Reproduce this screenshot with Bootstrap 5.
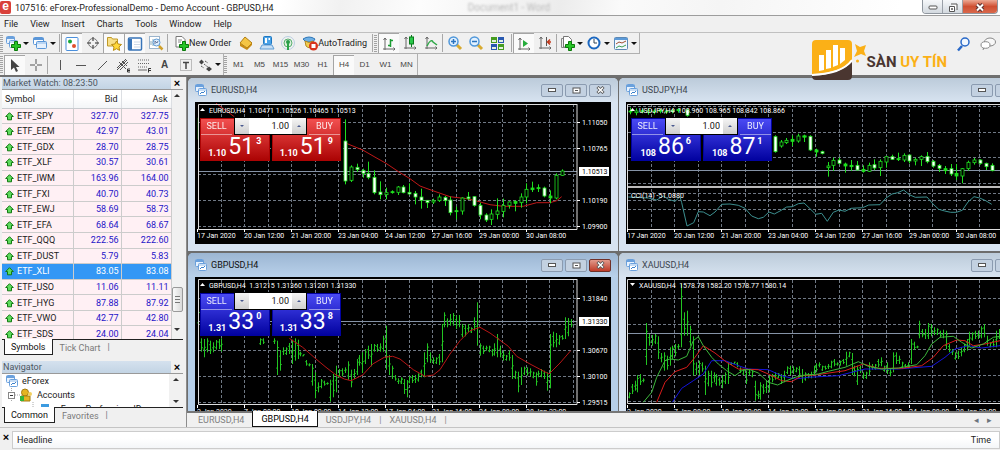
<!DOCTYPE html>
<html lang="en">
<head>
<meta charset="utf-8">
<meta name="viewport" content="width=device-width, initial-scale=1">
<title>eForex-ProfessionalDemo</title>
<link rel="stylesheet" href="https://cdn.jsdelivr.net/npm/bootstrap@5.3.0/dist/css/bootstrap.min.css">
<style>
:root{--ui:Roboto,"Liberation Sans",sans-serif}
body{font-family:var(--ui);font-size:9px;line-height:14px;color:#1c1c1c;background:#f0f0f0;overflow:hidden}
button,input{font-family:inherit;font-size:inherit;line-height:inherit;color:inherit}
button{border:0;background:none;padding:0}
.titlebar{height:16px;background:linear-gradient(100deg,#fff 28%,#f1f1f1 34%,#fdfdfd 42%,#ececec 56%,#fafafa 62%,#f5f5f5 72%,#fff 90%);border-bottom:1px solid #9d9d9d}
.logo-e{width:11px;height:13px;background:#d9403a;border-radius:2px;color:#fff;font:bold 12px/11px "Liberation Sans",sans-serif;text-align:center}
.wordghost{color:#bbb;filter:blur(1px);margin-left:194px;font-size:10px}
.syswin{height:14px;margin-right:2px;border:1px solid #8f969e;border-top:0;border-radius:0 0 4px 4px;overflow:hidden}
.syswin button{width:20px;background:linear-gradient(#f6f8fa,#d3d9df);border-right:1px solid #9aa0a8}
.syswin .closer{width:34px;background:linear-gradient(#eda994,#cf4f32 50%,#d9694c);border:0}
.menubar{height:17px;border-bottom:1px solid #c0c0c0;padding-left:4px;gap:12px}
.menubar a{color:#1c1c1c;text-decoration:none;line-height:16px}
.tools{height:21px}
.tools button{height:20px}
.tools svg{display:block;width:16px;height:16px}
.tb{width:21px;display:flex;align-items:center;justify-content:center}
.tbd{width:27px;display:flex;align-items:center;padding-left:1px!important}
.tbd::after{content:"";border:3px solid transparent;border-top-color:#111;border-bottom:0;margin-left:2px}
.pressed{background:#fafafa;border-left:1px solid #a5a5a5;border-top:1px solid #a5a5a5}
.vr-line{width:1px;height:18px;background:#a8a8a8;margin:0 1px}
.grip{width:4px;height:17px;background:repeating-linear-gradient(#a3a3a3 0 1px,#f0f0f0 1px 2px);border-right:1px solid #f0f0f0}
.toolgroup{border-bottom:1px solid #b0b0b0;border-right:1px solid #b0b0b0}
.tf{font:8px/18px "Liberation Sans",sans-serif;color:#444;width:21px}
.letter-a{font:bold 10px/18px "Liberation Sans",sans-serif;color:#444}
.brandmark{position:absolute;right:53px;top:40px;font:bold 15px/20px Roboto,sans-serif;color:#4a3630}
.brandmark span{padding-top:4px}
.brandmark em{font-style:normal;color:#fbb017}
.workspace{border-top:2px solid #707070;min-height:0}
.side{width:187px;border-right:1px solid #8c8c8c;padding:0 3px 0 2px}
.panelhead{height:12px;background:linear-gradient(#d5e1ee,#c3d4e4);color:#4d5661;line-height:12px;padding-left:1px}
.panelhead.lower{margin-top:6px}
.panelhead button,.xbtn{width:12px;background:#f0f0f0;font:bold 11px/10px "Liberation Sans",sans-serif;color:#000}
.listbox{background:#fff;border-top:1px solid #999;overflow:hidden}
.watch{height:250px}
.tree{height:34px}
.quotes{height:252px;width:169px;line-height:12px;border-collapse:collapse;table-layout:fixed}
.quotes th{font-weight:400;height:18px;border-right:1px solid #dcdfe3;border-bottom:1px solid #c9ccd0;background:linear-gradient(#fff 40%,#f3f5f7);padding:0 3px}
.quotes td{padding:0 2px;background:#fff0f4;border-right:1px solid #ccc;border-bottom:1px solid #ccc;text-align:right;color:#2414c8}
.quotes td:first-child{text-align:left;color:#1c1c1c;padding-left:3px;white-space:nowrap}
.quotes .picked td,.quotes .picked td:first-child{background:#3397f5;color:#fff}
.quotes svg{width:9px;height:9px;margin-right:3px;vertical-align:-2px}
.sbar{width:14px;background:#f1f1f1;font-size:6px;line-height:8px}
.tri{border:3px solid transparent;border-bottom-color:#333;border-top:0;width:0}
.tri.down{border-top:3px solid #333;border-bottom:0}
.thumb{width:11px;height:25px;border:1px solid #999;border-radius:2px;background:repeating-linear-gradient(#777 0 1px,#eee 1px 3px) center/5px 7px no-repeat,linear-gradient(90deg,#fafafa,#d9d9d9)}
.tabrow{height:16px;border-top:1px solid #222;padding-left:2px}
.tabrow button{color:#7a7a7a;padding:0 7px;height:15px}
.tabrow .on{background:#fff;color:#111;border:1px solid #222;border-top:0;margin-top:-1px;height:16px;padding:0 6px}
.mdi{background:#6d6d6d;display:grid;grid-template-columns:430fr 381fr;grid-template-rows:173px minmax(0,1fr);gap:2px 1px;padding:1px 0 0 1px;overflow:hidden;min-height:0}
.cwin{background:#d7e3f1;border-radius:5px 5px 0 0;padding:0 7px;overflow:hidden;position:relative}
.cwin.far{margin-right:-48px}
.cwin.live{background:#b6cfe9}
.cbar{height:24px;margin:0 -7px;padding:0 7px;background:linear-gradient(#bccbda,#d7e3f0)}
.live .cbar{background:linear-gradient(#9cb6d3,#b9d1ea)}
.cbar span{color:#3d4650}
.live .cbar span{color:#111}
.wb{width:22px;height:13px;border:1px solid #8b9bb0;border-radius:2px;background:#c3d1e1;display:flex;align-items:center;justify-content:center}
.wb.hot{background:linear-gradient(#e29a8c,#bf3b28);border-color:#703028}
.gap-fine{gap:2px}
.plot{display:block;width:100%;background:#000}
.plot text{font:7px Roboto,"Liberation Sans",sans-serif;fill:#fff;white-space:pre}
.trade{position:absolute;left:12px;top:40px;width:141px;height:43px;--hi:#f25050;--lo:#ac0404;color:#fff}
.trade.blue{--hi:#4a4af4;--lo:#0202a0}
.trade>button{flex:1 1 0;height:43px;background:linear-gradient(var(--hi),var(--lo));border:1px solid var(--lo);display:flex;flex-direction:column;justify-content:space-between}
.trade>button>b{font-weight:400;width:31px;text-align:center;line-height:15px;border-bottom:1px solid #fff8;opacity:.9}
.trade>button:last-child>b{align-self:flex-end}
.quote{width:100%;height:25px;justify-content:center;align-items:flex-end;gap:2px;font:bold 9px/13px Roboto,sans-serif}
.quote i{font:400 23px/26px Roboto,sans-serif}
.quote sup{top:0;align-self:flex-start;font:bold 9px/12px Roboto,sans-serif}
.lots{position:absolute;left:34px;top:-1px;width:73px;height:18px;border:1px solid #000;background:#fff;color:#111}
.lots button{width:14px;background:linear-gradient(#f5f5f5,#cfcfcf)}
.lots input{width:1px;flex:1;border:0;text-align:right;padding:0 3px}
.lots .tri{border-bottom-color:#4a5a90;margin:auto;border-width:2px;border-top-width:0}
.lots .tri.down{border-top:2px solid #4a5a90;border-bottom:0}
.booktabs{height:16px;border-top:2px solid #777;padding-left:3px;color:#888}
.booktabs button{color:#808080;padding:0 8px;height:14px}
.booktabs .on{background:#fff;color:#000;border:1px solid #111;border-top:0;height:16px;margin-top:-2px}
.terminal{height:23px;border-top:1px solid #c4c4c4}
.terminal .headrow{background:linear-gradient(#fff 40%,#f4f6f8);border:1px solid #ccc;margin-top:3px;height:18px;line-height:17px}
</style>
</head>
<body class="vh-100 d-flex flex-column">
<svg width="0" height="0" class="position-absolute">
<defs>
<symbol id="plus" viewBox="0 0 10 10"><path d="M3.5.5h3v3h3v3h-3v3h-3v-3h-3v-3h3z" fill="#27c427" stroke="#0a7a0a"/></symbol>
<symbol id="up" viewBox="0 0 9 9"><path d="M4.500 .7 8.300 4.500H6.500V7.800h-4V4.500H.7z" fill="#5fdc5f" stroke="#117a11"/></symbol>
<symbol id="chart" viewBox="0 0 12 12"><rect x=".5" y=".5" width="8" height="7" rx="1" fill="#e8f3ff" stroke="#6aa0dc"/><path d="M.5 2h8" stroke="#6aa0dc" stroke-width="2"/><rect x="3.500" y="4.500" width="8" height="7" rx="1" fill="#fff" stroke="#6aa0dc"/><path d="M4 6h7" stroke="#8bb8e8"/><path d="M5 10l2-2 1 1 2-2" fill="none" stroke="#3c82cc"/></symbol>
<symbol id="axes" viewBox="0 0 16 16"><path d="M4 2v12M2 13h12M2.500 4 4 2l1.500 2M12.500 11.500 14 13l-1.500 1.500" fill="none" stroke="#666"/></symbol>
<symbol id="lens" viewBox="0 0 16 16"><path d="M9.500 9.500 14 14" stroke="#d8aa30" stroke-width="3"/><circle cx="6.500" cy="6.500" r="4.500" fill="#e2f1ff" stroke="#4f97da" stroke-width="1.500"/></symbol>
</defs>
</svg>

<header>
<div class="titlebar d-flex align-items-center">
<div class="logo-e">e</div><span class="ms-1">107516: eForex-ProfessionalDemo - Demo Account - GBPUSD,H4</span>
<span class="wordghost">Document1 - Word</span>
<div class="syswin d-flex ms-auto align-self-start">
<button aria-label="Minimize"><svg width="10" height="6"><rect x="1" y="1" width="8" height="3" rx="1" fill="#fff" stroke="#555"/></svg></button>
<button aria-label="Restore"><svg width="10" height="10"><path d="M3 1h6v6M1.500 3.500h5v5h-5zM3.500 5.500h1v1h-1z" fill="#fff" stroke="#555"/></svg></button>
<button aria-label="Close" class="closer"><svg width="10" height="9"><path d="M2 1.500l6 6M8 1.500l-6 6" stroke="#5d3030" stroke-width="4"/><path d="M2 1.500l6 6M8 1.500l-6 6" stroke="#fff" stroke-width="2"/></svg></button>
</div>
</div>
<nav class="menubar d-flex">
<a href="#">File</a><a href="#">View</a><a href="#">Insert</a><a href="#">Charts</a><a href="#">Tools</a><a href="#">Window</a><a href="#">Help</a>
</nav>
<div class="d-flex tools">
<div class="toolgroup d-flex align-items-center">
<div class="grip"></div>
<button class="tbd" aria-label="New chart"><svg viewBox="0 0 16 16"><use href="#chart" x="1" y="1" width="12" height="12"/><use href="#plus" x="6" y="6" width="10" height="10"/></svg></button>
<button class="tbd" aria-label="Profiles"><svg viewBox="0 0 16 16"><rect x="1.500" y="2.500" width="10" height="7" rx="1" fill="#fff" stroke="#5a96d8"/><path d="M1.500 4h10" stroke="#5a96d8" stroke-width="2"/><rect x="4.500" y="6.500" width="10" height="7" rx="1" fill="#e6f1fd" stroke="#5a96d8"/><path d="M5 8h9" stroke="#8bb8e8"/></svg></button>
<div class="vr-line"></div>
<button class="tb pressed" aria-label="Market Watch"><svg viewBox="0 0 16 16"><rect x="2" y="1.500" width="12" height="13" rx="1" fill="#fff" stroke="#4a8fdc"/><circle cx="6" cy="5.500" r="2" fill="#18a838"/><circle cx="10" cy="10" r="2" fill="#e0502c"/></svg></button>
<button class="tb" aria-label="Data window"><svg viewBox="0 0 16 16"><circle cx="8" cy="8" r="4.500" fill="none" stroke="#777"/><path d="M8 2v4M8 10v4M2 8h4M10 8h4" stroke="#666" stroke-width="1.500"/></svg></button>
<button class="tb pressed" aria-label="Navigator"><svg viewBox="0 0 16 16"><path d="M1.500 1.500h4l1 1.500h5v7h-10z" fill="#f8e08a" stroke="#c09a28"/><path d="M10.500 5l1.600 3 3.400.5-2.500 2.400.6 3.500-3.100-1.700-3.100 1.700.6-3.500L5.500 8.500 8.900 8z" fill="#ffd83a" stroke="#b88a10"/></svg></button>
<button class="tb pressed" aria-label="Terminal"><svg viewBox="0 0 16 16"><rect x="1.500" y="2" width="13" height="12" rx="1" fill="#fff" stroke="#3874b8" stroke-width="1.500"/><rect x="2" y="3" width="3" height="11" fill="#3874b8"/><path d="M7 6h6M7 8.500h6M7 11h6" stroke="#cdd9e8"/></svg></button>
<button class="tb" aria-label="Strategy tester"><svg viewBox="0 0 16 16"><rect x="1.500" y="1.500" width="10" height="12" fill="#fff" stroke="#9bb4cc"/><path d="M3 10V6M5 11V4" stroke="#8ab"/><path d="M11 11l3.500 3.500" stroke="#cfa02c" stroke-width="2.500"/><circle cx="8.500" cy="7.500" r="3.500" fill="#dceeff" stroke="#5f9cd4"/><path d="M7 9V6l2 2 1-2" fill="none" stroke="#679"/></svg></button>
<div class="vr-line"></div>
<button class="d-flex align-items-center ps-1 pe-1"><svg viewBox="0 0 16 16"><path d="M3 1.500h6l3 3V12H3z" fill="#fff" stroke="#777"/><path d="M5 5h4M5 7h3" stroke="#888"/><use href="#plus" x="6" y="6" width="10" height="10"/></svg>New Order</button>
<button class="tb" aria-label="MetaEditor"><svg viewBox="0 0 16 16"><path d="M2 8 7 2l7 6-5 5z" fill="#f4c544" stroke="#b07c10"/><path d="M2 8v3l7 4 5-5V8l-5 5z" fill="#c78b14"/></svg></button>
<button class="tb" aria-label="Community"><svg viewBox="0 0 16 16"><rect x="4.500" y="1.500" width="8" height="8" rx="1" fill="#4aa3e8" stroke="#1f77c0"/><path d="M6 3h2v5H6zM9.500 3h1.500v2H9.500z" fill="#fff"/><path d="M3 10h10l2 4H1z" fill="#c8dff4" stroke="#5f9cd4"/></svg></button>
<button class="tb" aria-label="Signals"><svg viewBox="0 0 16 16"><circle cx="8" cy="8" r="6.500" fill="none" stroke="#b9cfe0"/><circle cx="8" cy="8" r="4" fill="#dcefdc" stroke="#58b070"/><circle cx="8" cy="7" r="2" fill="#289c48"/><path d="M8 8v7" stroke="#2ba54a" stroke-width="2"/></svg></button>
<button class="d-flex align-items-center ps-1 pe-1"><svg viewBox="0 0 16 16"><path d="M1 4q6-4 12 0l-2 3H4z" fill="#6fb0e4" stroke="#2d76b8"/><path d="M3 6q4 3 8 0v4q-3 5-7 1z" fill="#f3cd50" stroke="#b68a1c"/><circle cx="11.500" cy="11" r="4.500" fill="#d8341c"/><rect x="9.500" y="9" width="4" height="4" fill="#fff"/></svg>AutoTrading</button>
<div class="vr-line"></div><div class="grip"></div>
<button class="tb pressed" aria-label="Bar chart"><svg viewBox="0 0 16 16"><use href="#axes"/><path d="M9.500 3v8M7 9.500h2.500M9.500 4.500H12" stroke="#1c9c34" stroke-width="1.500"/></svg></button>
<button class="tb" aria-label="Candlesticks"><svg viewBox="0 0 16 16"><use href="#axes"/><path d="M9.500 0v12" stroke="#0a7a1c"/><rect x="7.500" y="2" width="4" height="7" fill="#2ac84a" stroke="#0a7a1c"/></svg></button>
<button class="tb" aria-label="Line chart"><svg viewBox="0 0 16 16"><use href="#axes"/><path d="M4 11q4-8 6-4l4 3" fill="none" stroke="#2fa848" stroke-width="1.500"/></svg></button>
<div class="vr-line"></div>
<button class="tb" aria-label="Zoom in"><svg viewBox="0 0 16 16"><use href="#lens"/><path d="M4 6.500h5M6.500 4v5" stroke="#2a74c0" stroke-width="1.500"/></svg></button>
<button class="tb" aria-label="Zoom out"><svg viewBox="0 0 16 16"><use href="#lens"/><path d="M4 6.500h5" stroke="#2a74c0" stroke-width="1.500"/></svg></button>
<button class="tb" aria-label="Tile windows"><svg viewBox="0 0 16 16"><path d="M2 2h6v6H2zM9 9h6v6H9z" fill="#459c20"/><path d="M9 2h6v6H9zM2 9h6v6H2z" fill="#2858b0"/><path d="M3 5h4v2H3zM10 5h4v2h-4zM3 12h4v2H3zM10 12h4v2h-4z" fill="#e4f2e0"/></svg></button>
<div class="vr-line ms-1"></div>
<button class="tb pressed" aria-label="Auto scroll"><svg viewBox="0 0 16 16"><use href="#axes"/><path d="M7 4l5 3.500L7 11z" fill="#25ac3c"/></svg></button>
<button class="tb" aria-label="Chart shift"><svg viewBox="0 0 16 16"><use href="#axes"/><path d="M9.500 2v9" stroke="#555"/><path d="M14 7h-3M13 4.500 10.500 7 13 9.500" fill="none" stroke="#c23a1c" stroke-width="1.500"/></svg></button>
<div class="vr-line"></div>
<button class="tbd" aria-label="Indicators"><svg viewBox="0 0 16 16"><path d="M2.500 3.500h7v9h-7z" fill="#eee" stroke="#888"/><path d="M4.500 1.500h5l3 3V12h-8z" fill="#fff" stroke="#777"/><use href="#plus" x="6" y="6" width="10" height="10"/></svg></button>
<button class="tbd" aria-label="Periods"><svg viewBox="0 0 16 16"><circle cx="8" cy="8" r="5.500" fill="#fff" stroke="#1c68c0" stroke-width="2"/><path d="M8 4v4h3" fill="none" stroke="#345"/></svg></button>
<button class="tbd" aria-label="Templates"><svg viewBox="0 0 16 16"><rect x="1.500" y="2.500" width="13" height="12" rx="1" fill="#f2f8ff" stroke="#5c88b4"/><path d="M1.500 4h13" stroke="#5c9ad8" stroke-width="2"/><path d="M3 9l3-2 3 1 4-2" fill="none" stroke="#a05030"/><path d="M3 13l3-2 3 1 4-2" fill="none" stroke="#3c9c50"/></svg></button>
</div>
<div class="ms-auto me-1 d-flex align-items-center gap-2">
<svg viewBox="0 0 16 16"><path d="M6 10 2 14.500" stroke="#2868c8" stroke-width="2.500"/><circle cx="9" cy="6" r="4" fill="#f2f8ff" stroke="#2868c8" stroke-width="1.500"/></svg>
<svg viewBox="0 0 16 16"><ellipse cx="10" cy="6" rx="5.500" ry="4" fill="#f8f8f8" stroke="#888"/><path d="M3 14l1-3" stroke="#888"/><ellipse cx="5.500" cy="9" rx="4.500" ry="3.300" fill="#fff" stroke="#888"/></svg>
</div>
</div>
<div class="d-flex tools">
<div class="toolgroup d-flex align-items-center border-bottom-0">
<div class="grip"></div>
<button class="tb pressed" aria-label="Cursor"><svg viewBox="0 0 16 16"><path d="M4 2v11l3-2.500 2 4.500 2-1-2-4h3.500z" fill="#444"/></svg></button>
<button class="tb" aria-label="Crosshair"><svg viewBox="0 0 16 16"><path d="M8 2v5M8 9v5M2 8h5M9 8h5" stroke="#555"/></svg></button>
<div class="vr-line"></div>
<button class="tb" aria-label="Vertical line"><svg viewBox="0 0 16 16"><path d="M8.500 3v10" stroke="#555"/></svg></button>
<button class="tb" aria-label="Horizontal line"><svg viewBox="0 0 16 16"><path d="M3 8.500h10" stroke="#555"/></svg></button>
<button class="tb" aria-label="Trendline"><svg viewBox="0 0 16 16"><path d="M4 13l9-9" stroke="#555"/></svg></button>
<button class="tb" aria-label="Channel"><svg viewBox="0 0 16 16"><path d="M2 11l9-9M5 13l8-8M2 13 12 3M4 5l7 7M7 4l5 5" stroke="#555"/><path d="M15 12h-2.500v3H15M12.500 13.500H15" fill="none" stroke="#333"/></svg></button>
<button class="tb" aria-label="Fibonacci"><svg viewBox="0 0 16 16"><path d="M2 3h12M2 6.500h12M2 10h9" stroke="#666" stroke-dasharray="1 1"/><path d="M2 13h9" stroke="#666"/><path d="M12.500 15.500v-4H15M12.500 13.500H15" fill="none" stroke="#333"/></svg></button>
<button class="tb letter-a" aria-label="Text">A</button>
<button class="tb" aria-label="Text label"><svg viewBox="0 0 16 16"><rect x="2.500" y="2.500" width="11" height="11" fill="none" stroke="#888" stroke-dasharray="1 1"/><path d="M5 5.500h6M8 5.500V12" stroke="#444" stroke-width="1.500"/></svg></button>
<button class="tbd" aria-label="Arrows"><svg viewBox="0 0 16 16"><path d="M2 5l2.500-2.500L7 5 4.500 7.500zM9 12l3-2.500 3 2.500-3 2.500z" fill="#444"/><path d="M7 7l5 4M8 4l3 2M4 9l3 2" stroke="#555" stroke-dasharray="2 1"/></svg></button>
</div>
<div class="toolgroup d-flex align-items-center border-bottom-0">
<div class="grip"></div>
<button class="tf">M1</button><button class="tf">M5</button><button class="tf">M15</button><button class="tf">M30</button><button class="tf">H1</button><button class="tf pressed">H4</button><button class="tf">D1</button><button class="tf">W1</button><button class="tf">MN</button>
</div>
</div>
</header>

<main class="workspace flex-grow-1 d-flex">
<aside class="side flex-shrink-0 d-flex flex-column">
<div class="panelhead d-flex justify-content-between flex-shrink-0"><span>Market Watch: 08:23:50</span><button aria-label="Close Market Watch">×</button></div>
<div class="listbox watch d-flex justify-content-between flex-shrink-0">
<table class="quotes">
<colgroup><col style="width:71px"><col style="width:48px"><col style="width:50px"></colgroup>
<thead><tr><th>Symbol</th><th class="text-end">Bid</th><th class="text-end">Ask</th></tr></thead>
<tbody id="rows"></tbody>
</table>
<div class="sbar d-flex flex-column align-items-center pt-1">
<div class="tri"></div><div class="thumb mt-auto"></div><div class="tri down my-2 mt-3"></div>
</div>
</div>
<div class="tabrow d-flex flex-shrink-0"><button class="on">Symbols</button><button>Tick Chart</button><span class="text-secondary">|</span></div>
<div class="panelhead lower d-flex justify-content-between flex-shrink-0"><span>Navigator</span><button aria-label="Close Navigator">×</button></div>
<div class="listbox tree d-flex justify-content-between flex-shrink-0">
<div class="ps-1 flex-grow-1">
<div class="d-flex align-items-center gap-1"><svg width="12" height="12"><use href="#chart"/></svg>eForex</div>
<div class="d-flex align-items-center gap-1"><svg width="27" height="14"><path d="M5.500 0v14M9 7h5" stroke="#aaa" stroke-dasharray="1 1"/><rect x="2.500" y="4.500" width="6" height="6" fill="#fff" stroke="#888"/><path d="M4 7.500h3" stroke="#333"/><circle cx="19" cy="4.500" r="3.500" fill="#e6b422" stroke="#a67c10"/><path d="M15 13V8h9v5z" fill="#e6b422" stroke="#a67c10"/><circle cx="24" cy="6" r="2" fill="#f3d060"/><path d="M14 8h4v5h-4z" fill="#35b53c"/></svg>Accounts</div>
<div class="d-flex align-items-center gap-1 ps-4"><svg width="22" height="14"><path d="M3 0v7h7" stroke="#aaa" fill="none" stroke-dasharray="1 1"/><rect x="11" y="2" width="8" height="9" fill="#3c9be0"/></svg>eForex-ProfessionalDemo</div>
</div>
<div class="sbar flex-shrink-0 d-flex flex-column align-items-center justify-content-between py-1"><div class="tri"></div><div class="tri down"></div></div>
</div>
<div class="tabrow d-flex flex-shrink-0"><button class="on">Common</button><button>Favorites</button><span class="text-secondary">|</span></div>
</aside>

<div class="flex-grow-1 d-flex flex-column" style="min-width:0">
<section class="mdi flex-grow-1" id="mdi"></section>
<div class="booktabs d-flex flex-shrink-0"><button>EURUSD,H4</button><button class="on">GBPUSD,H4</button><button>USDJPY,H4</button>|<button>XAUUSD,H4</button>|
<span class="ms-auto me-2 text-secondary d-flex gap-2"><span>◂</span><span>▸</span></span></div>
</div>
</main>

<footer class="terminal d-flex flex-shrink-0">
<button class="xbtn me-0 align-self-start mt-1" aria-label="Close terminal">×</button>
<div class="headrow flex-grow-1 d-flex justify-content-between px-1"><span>Headline</span><span class="pe-1">Time</span></div>
</footer>

<div class="brandmark d-flex align-items-center">
<svg width="55" height="40" viewBox="0 0 55 40"><path d="M4 0h32q4 0 4 4v16Q32 32 0 34V4q0-4 4-4z" fill="#fbb017"/><path d="M0 36q28-2 40-14v14q0 4-4 4H4q-4 0-4-4z" fill="#4a3630"/><path d="M7 15h5v15l-5 1zM14 10h5v18l-5 1zM21 5h5v20l-5 2zM28 8h5v12l-5 4z" fill="#fff"/><path d="M0 35q30-1 40-15" fill="none" stroke="#fff" stroke-width="2"/><path d="M43 4l5 3 6-2-2 6 2 5-5-2-7 3 3-6z" fill="#fbb017"/><circle cx="45.500" cy="21" r="1.500" fill="#fbb017"/></svg>
<span>SÀN <em>UY TÍN</em></span>
</div>

<script src="https://cdn.jsdelivr.net/npm/bootstrap@5.3.0/dist/js/bootstrap.bundle.min.js"></script>
<script>
const quotes = `SPY 327.70 327.75,EEM 42.97 43.01,GDX 28.70 28.75,XLF 30.57 30.61,IWM 163.96 164.00,FXI 40.70 40.73,EWJ 58.69 58.73,EFA 68.64 68.67,QQQ 222.56 222.60,DUST 5.79 5.83,XLI 83.05 83.08,USO 11.06 11.11,HYG 87.88 87.92,VWO 42.77 42.80,SDS 24.00 24.04`;
document.getElementById('rows').innerHTML = quotes.split(',').map(q => {
  const [s, b, a] = q.split(' ');
  return `<tr class="${s === 'XLI' ? 'picked' : ''}"><td><svg><use href="#up"/></svg>ETF_${s}</td><td>${b}</td><td>${a}</td></tr>`;
}).join('');

/* Series are kept in thirds of a pixel, relative to each chart's own origin. */
const T = 3;
const line = (pts, ox, oy, col, w = 1) =>
  `<polyline fill="none" stroke="${col}" stroke-width="${w}" points="${pts.trim().split(/\s+/).map(p => { const [x, y] = p.split(','); return (ox + x / T).toFixed(1) + ',' + (oy + y / T).toFixed(1); }).join(' ')}"/>`;
/* candle: x, high, low, body top, body bottom, kind (w filled, h hollow) */
const candles = (src, ox, oy) => src.trim().split(/\s+/).map(c => {
  const [x, h, l, a, b, k] = c.split(',');
  const X = Math.round(ox + x / T), Y = v => oy + v / T, hgt = Math.max(1, (b - a) / T);
  return `<path d="M${X + .5} ${Y(h)}V${Y(l)}" stroke="#1fe01f"/><rect x="${X - 1}" y="${Y(a)}" width="3" height="${hgt}" fill="${k === 'w' ? '#fff' : k === 'h' ? '#000' : '#1fe01f'}" stroke="#1fe01f" stroke-width=".8"/>`;
}).join('');
/* bar: x, high, low; open and close ticks sit inside the range */
const bars = (src, ox, oy) => src.trim().split(/\s+/).map((c, i) => {
  const [x, r] = c.split(':'), [h, l] = r.split('-').map(Number);
  const X = Math.round(ox + x / T) + .5, Y = v => (oy + v / T).toFixed(1), q = (l - h) * (i % 3 === 0 ? .2 : i % 3 === 1 ? .7 : .45);
  return `<path d="M${X} ${Y(h)}V${Y(l)}" stroke="#22c522"/><path d="M${X - 1.5} ${Y(l - q)}h1M${X + .5} ${Y(h + q)}h1" stroke="#1a9a1a"/>`;
}).join('');
const grid = (x0, x1, y0, y1, gx, ys) => {
  let d = '';
  for (let i = 0; gx + i * 23.45 < x1; i++) d += `M${Math.round(gx + i * 23.45) + .5} ${y0}V${y1}`;
  ys.forEach(y => d += `M${x0} ${y + .5}H${x1}`);
  return `<path d="${d}" stroke="#6f7884" stroke-dasharray="3 2"/>`;
};
const labels = (arr, x, y) => arr.map((t, i) => `<text x="${x + i * 47}" y="${y}">${t}</text>`).join('') + `<path d="${arr.map((t, i) => `M${x + .5 + i * 47} ${y - 9}v3`).join('')}" stroke="#fff"/>`;
const scale = (rows, now, y) => rows.map(r => `<path d="M577 ${r[1] + .5}h3" stroke="#fff"/><text x="582" y="${r[1] + 3}">${r[0]}</text>`).join('') +
  `<rect x="579" y="${y - 4}" width="30" height="9" fill="#fff"/><text x="582" y="${y + 3}" style="fill:#000">${now}</text>`;
const frame = (x0, y0, x1, y1) => `<path d="M${x1} ${y0}.500H${x0}.500V${y1}.500H${x1}${x1 < 600 ? `V${y0}` : ''}" fill="none" stroke="#ddd"/>`;
const now = (x0, x1, y) => `<path d="M${x0} ${y}.500H${x1}" stroke="#8593a6"/>`;
const d1 = ['17 Jan 2020', '20 Jan 12:00', '21 Jan 20:00', '23 Jan 04:00', '24 Jan 12:00', '27 Jan 16:00', '29 Jan 00:00', '30 Jan 08:00'];
const d2 = ['2 Jan 2020', '7 Jan 08:00', '10 Jan 00:00', '14 Jan 12:00', '17 Jan 04:00', '21 Jan 16:00', '24 Jan 08:00', '28 Jan 22:00'];

const eur = grid(198, 577, 103, 228, 221, [121, 147, 173, 199, 225]) + now(198, 577, 170) +
  line('90,82 145,122', 186, 75, '#c01818') + line('37,125 37,190', 186, 75, '#1fe01f') +
  line('476,200 530,222 570,245 600,262 642,290 672,308 702,330 737,343 792,362 842,368 872,375 912,386 952,391 1012,391 1052,380 1092,380 1112,374 1127,362', 186, 75, '#c01818') +
  candles('476,130,325,195,315,w 494,268,318,273,313,h 512,263,288,274,281,w 530,278,305,283,292,w 547,257,310,292,304,w 565,283,355,304,350,w 582,316,370,348,356,w 600,335,370,350,356,h 617,343,353,347,349 635,330,357,333,349,h', 186, 75) +
  candles('10,327,352,333,350,w 28,322,356,349,354,w 46,345,385,352,363,w 63,338,398,363,373,w 81,372,396,373,380,w 98,368,384,374,378,h 116,355,378,363,374,h 134,360,390,364,374,w 151,362,418,372,410,w 169,392,430,404,406 186,364,416,366,405,h 204,348,372,363,368,w 221,360,392,362,388,w 239,380,430,388,417,w 257,412,438,417,432,w 274,400,447,414,430,h 292,367,430,405,415,h 309,368,424,388,406,h 327,376,398,378,388,h 345,374,406,376,382 362,352,395,363,380,h 379,322,382,340,363,h 397,317,348,336,341 415,325,348,335,338 433,332,364,336,360,w 450,343,382,360,366 467,292,370,298,366,h 485,280,300,285,298,h', 400, 75) +
  frame(198, 103, 577, 228) + scale([['1.11050', 121], ['1.10765', 147], ['1.10190', 199], ['1.09900', 225]], '1.10513', 170) + labels(d1, 197, 237);

const jpy = grid(628, 1040, 103, 228, 651, [105, 131, 156, 182, 192, 199, 208]) + now(628, 1040, 169) +
  candles('46,95,115,105,108 64,97,118,105,110,h 82,98,112,104,107 100,97,116,104,109,h 118,100,115,105,107 136,98,112,102,106 154,100,114,105,107 172,99,112,103,106 190,97,110,100,104 215,98,122,102,118,w 463,178,200,182,192,h 479,178,230,182,227,w 497,192,215,198,210,h 514,186,204,193,200,h 532,178,210,190,196 549,173,200,180,195,h 567,176,198,180,182', 615, 75) +
  candles('12,178,195,180,183 30,178,225,181,222,w 47,218,242,222,228 65,224,235,227,232,w 83,258,302,270,275,h 100,245,285,253,268,h 117,245,265,252,262,w 135,260,290,264,270 153,252,285,268,272 170,255,283,268,282,w 188,268,290,280,286 206,260,288,268,286,h 223,250,283,266,276,w 241,250,300,256,275,h 258,240,275,242,258,h 276,236,252,242,250,w 293,230,255,248,250 311,232,258,238,252,h 328,236,262,237,255,w 346,245,268,250,255,h 363,238,270,242,250,h 381,228,262,241,257,w 399,252,275,256,270,w 416,264,288,268,277,w 434,270,294,278,284 452,264,300,278,294,w 469,264,312,292,300 487,276,322,278,300,h 504,254,284,259,278,h 522,246,266,252,260,h 539,250,266,252,262,w 557,260,282,262,272,w 575,262,286,268,284,w', 800, 75) +
  line('40,363 100,366 125,372 145,360 160,370 180,376 195,362 200,380 216,450 236,440 250,407 265,408 285,419 300,408 320,385 345,384 370,388 390,397 410,420 430,428 445,424 462,408 478,414 495,405 515,393 532,392 550,383 567,381 585,398 602,415 620,412 637,436 655,409 672,402 690,406 708,397 743,395 761,387 795,386 813,366 831,354 848,350 866,342 883,356 901,364 936,363 954,384 971,400 989,405 1007,409 1024,409 1042,403 1059,378 1077,362 1094,366 1112,374 1130,385', 615, 75, '#3c8f8f') +
  `<path d="M628 186H1040" stroke="#bbb" stroke-width="2"/><text x="631" y="197">CCI(14) -51.0880</text>` + frame(627, 103, 1040, 228) + labels(d1, 627, 237);

const gbp = grid(198, 577, 279, 403, 221, [297, 323, 349, 375, 401]) + now(198, 577, 320) +
  bars('37:180-232 46:268-308 55:270-325 64:268-310 73:275-315 82:280-310 90:273-302 99:270-300 106:268-308 222:268-288 230:268-285 265:268-285 274:275-378 283:303-365 292:295-318 300:295-318 309:282-315 318:272-345 327:268-335 335:272-330 343:308-322 352:316-322 361:333-350 370:343-352 379:345-410 388:370-448 397:400-430 406:390-418 415:395-410 423:400-407 432:392-458 441:375-445 450:350-430 459:360-385 468:358-382 476:355-372 485:337-392 494:362-415 503:360-390 512:330-378 520:318-350 529:310-372 538:300-345 547:290-330 556:285-352 565:285-308 573:285-308 582:283-308 591:260-308 600:230-362 609:318-378 617:350-390 626:378-395 635:388-405 644:388-405', 186, 248) +
  bars('2:385-400 11:390-435 20:393-445 28:382-403 37:378-402 46:378-402 55:373-398 64:362-385 72:310-385 80:283-340 89:310-342 98:325-345 107:325-345 116:315-348 125:225-340 133:190-235 142:208-235 151:195-230 160:192-230 168:200-240 177:198-235 186:225-265 195:228-262 204:225-250 213:235-252 222:205-245 230:160-290 239:283-320 248:290-315 257:290-305 266:290-310 275:300-322 283:283-320 292:255-325 301:290-325 310:305-335 319:318-335 328:305-335 337:318-390 345:365-390 354:368-430 363:355-408 372:353-378 380:355-380 389:358-382 398:368-388 407:370-410 415:365-385 424:360-385 432:365-390 441:370-425 450:255-418 459:248-295 468:252-295 477:258-288 486:258-272 495:205-270 504:207-262 512:210-235', 400, 248) +
  line('310,268 350,295 390,330 420,355 450,378 475,390 495,395 530,378 560,345 595,325 620,322 642,330 682,362 717,382 742,378 762,362 792,315 822,275 852,245 882,235 912,252 967,292 992,322 1032,345 1089,375 1122,342 1154,305', 186, 248, '#b81616') +
  frame(198, 278, 577, 403) + scale([['1.31840', 297], ['1.30670', 349], ['1.30100', 375], ['1.29515', 401]], '1.31330', 320) + labels(d2, 197, 413);

const xau = grid(628, 1040, 279, 402, 651, [297, 323, 348, 374, 400]) + now(628, 1040, 332) +
  bars('41:430-448 50:405-435 59:395-425 67:378-430 76:375-408 85:388-400 93:222-348 102:255-290 111:258-290 120:255-285 129:262-330 138:312-340 147:310-365 156:320-362 164:295-350 172:290-330 181:285-322 190:285-300 199:105-295 208:190-260 216:185-260 225:230-290 234:262-380 243:340-378 252:335-378 261:340-368 269:350-438 278:365-412 287:365-415 296:370-400 304:375-410 313:385-410 322:378-418 331:370-405 340:340-405 349:340-348 358:338-345 367:340-355 375:355-372 384:362-378 393:365-405 401:362-378 410:365-385 419:395-455 428:425-450 436:400-452 445:405-435 454:395-432 463:380-430 472:375-400 481:370-392 490:372-388 498:375-405 507:365-400 516:352-375 525:350-378 534:352-375 543:355-370 552:352-385 560:360-402 569:370-395 578:372-388 587:368-388 596:350-375 604:343-370 613:340-355 622:350-366 631:350-362 640:345-360 649:335-358 658:330-352 667:340-350 676:335-350 685:330-345 693:308-350 701:308-325 710:312-378 718:350-382 727:350-408 736:350-372 745:370-390 754:368-390 763:340-378 772:345-362 781:345-362 790:330-355 799:325-352 808:350-368 816:340-375 825:360-382 834:310-370 843:310-345 852:320-345 860:338-358 869:345-358 878:340-358 887:270-345 896:278-302 905:290-298 913:215-268 922:240-265 931:240-270 940:222-270 949:225-262 957:235-258 966:238-258 975:245-265 984:242-268 993:245-300 1001:285-310 1010:300-318 1019:310-332 1028:305-330 1037:295-322 1046:285-310 1055:270-305 1063:248-290 1072:250-275 1081:245-270 1090:245-270 1099:232-268 1108:225-265 1117:260-290 1126:280-295 1134:270-295 1143:245-295 1152:240-270', 615, 248) +
  line('172,460 200,418 235,395 265,375 290,335 330,335 370,350 400,360 460,362 500,380 540,390 580,385 670,380 750,360 850,360 950,352 990,325 1020,300 1060,290 1100,297 1155,290', 615, 248, '#1414dc') +
  line('125,460 150,400 180,368 215,355 240,325 265,290 300,312 335,340 370,360 430,362 460,375 500,395 530,398 560,380 600,378 690,365 745,345 790,358 860,358 920,350 955,325 985,290 1025,273 1050,275 1075,290 1110,285 1155,275', 615, 248, '#d81c1c') +
  line('85,460 110,430 125,385 150,335 165,330 190,333 215,322 235,275 250,263 265,290 290,325 310,345 335,365 360,380 385,362 405,362 430,372 460,400 488,408 510,397 540,385 570,378 610,375 640,367 690,355 730,338 760,352 800,360 850,357 905,347 930,320 950,285 975,265 1015,262 1040,280 1070,297 1105,285 1135,265 1155,262', 615, 248, '#3cb83c') +
  frame(627, 278, 1040, 402) + labels(d2, 627, 413);

const head = (x, y, t, dir) => `<path d="${dir === 'down' ? `M${x} ${y - 5}h5l-2.500 3z` : `M${x} ${y - 2}h5l-2.500 -3z`}" fill="#fff"/><text x="${x + 9}" y="${y}">${t}</text>`;
const minSvg = '<svg width="8" height="5"><rect x=".5" y=".5" width="7" height="3" fill="#fff" stroke="#555"/></svg>';
const maxSvg = '<svg width="9" height="7"><rect x="1" y="1" width="7" height="5" fill="#fff" stroke="#555"/><path d="M3 3.500h3" stroke="#555"/></svg>';
const xSvg = '<svg width="9" height="8"><path d="M1.500 1l6 6M7.500 1l-6 6" stroke="#555" stroke-width="3"/><path d="M2 1.500l5 5M7 1.500l-5 5" stroke="#fff" stroke-width="1.500"/></svg>';
const trade = (blue, s, b) => `<div class="trade gap-fine d-flex ${blue ? 'blue' : ''}">
<button><b>SELL</b><span class="quote d-flex">${s[0]}<i>${s[1]}</i><sup>${s[2]}</sup></span></button>
<div class="lots d-flex"><button aria-label="Less"><div class="tri down"></div></button><input value="1.00" aria-label="Volume"><button aria-label="More"><div class="tri"></div></button></div>
<button><b>BUY</b><span class="quote d-flex">${b[0]}<i>${b[1]}</i><sup>${b[2]}</sup></span></button></div>`;
const win = (sym, cls, box, h, art, panel) => `<article class="cwin ${cls}">
<div class="cbar d-flex align-items-center"><svg width="12" height="12" class="me-1"><use href="#chart"/></svg><span>${sym},H4</span>
<div class="ms-auto d-flex gap-fine"><button class="wb" aria-label="Minimize">${minSvg}</button><button class="wb" aria-label="Maximize">${maxSvg}</button><button class="wb ${cls === 'live' ? 'hot' : ''}" aria-label="Close">${xSvg}</button></div></div>
<svg class="plot" height="${h}" viewBox="${box}" preserveAspectRatio="xMinYMin meet">${art}</svg>${panel}</article>`;
document.getElementById('mdi').innerHTML =
  win('EURUSD', '', '195 101 416 142', 142, eur + head(200, 112, 'EURUSD,H4  1.10471 1.10526 1.10465 1.10513'), trade(false, ['1.10', '51', '3'], ['1.10', '51', '9'])) +
  win('USDJPY', 'far', '626 101 415 142', 142, jpy + head(630, 112, 'USDJPY,H4  108.960 108.965 108.842 108.866'), trade(true, ['108', '86', '6'], ['108', '87', '1'])) +
  win('GBPUSD', 'live', '195 276 416 142', 142, gbp + head(200, 287, 'GBPUSD,H4  1.31215 1.31360 1.31201 1.31330'), trade(true, ['1.31', '33', '0'], ['1.31', '33', '8'])) +
  win('XAUUSD', 'far', '626 276 415 142', 142, xau + head(630, 287, 'XAUUSD,H4  1578.78 1582.20 1578.77 1580.14', 'down'), '');
</script>
</body>
</html>
